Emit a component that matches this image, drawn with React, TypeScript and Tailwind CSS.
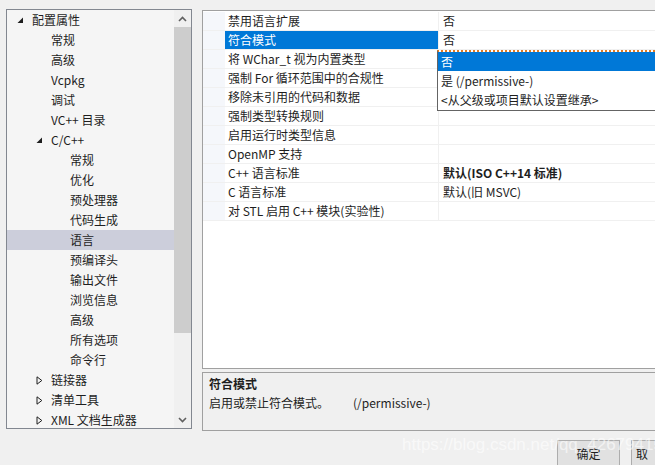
import React from "react";

type TreeItem = { label: string; level: number; arrow?: "open" | "closed"; selected?: boolean };

const treeItems: TreeItem[] = [
  { label: "配置属性", level: 0, arrow: "open" },
  { label: "常规", level: 1 },
  { label: "高级", level: 1 },
  { label: "Vcpkg", level: 1 },
  { label: "调试", level: 1 },
  { label: "VC++ 目录", level: 1 },
  { label: "C/C++", level: 1, arrow: "open" },
  { label: "常规", level: 2 },
  { label: "优化", level: 2 },
  { label: "预处理器", level: 2 },
  { label: "代码生成", level: 2 },
  { label: "语言", level: 2, selected: true },
  { label: "预编译头", level: 2 },
  { label: "输出文件", level: 2 },
  { label: "浏览信息", level: 2 },
  { label: "高级", level: 2 },
  { label: "所有选项", level: 2 },
  { label: "命令行", level: 2 },
  { label: "链接器", level: 1, arrow: "closed" },
  { label: "清单工具", level: 1, arrow: "closed" },
  { label: "XML 文档生成器", level: 1, arrow: "closed" },
];

const props: { name: string; value: string; bold?: boolean; selected?: boolean }[] = [
  { name: "禁用语言扩展", value: "否" },
  { name: "符合模式", value: "否", selected: true },
  { name: "将 WChar_t 视为内置类型", value: "" },
  { name: "强制 For 循环范围中的合规性", value: "" },
  { name: "移除未引用的代码和数据", value: "" },
  { name: "强制类型转换规则", value: "" },
  { name: "启用运行时类型信息", value: "" },
  { name: "OpenMP 支持", value: "" },
  { name: "C++ 语言标准", value: "默认(ISO C++14 标准)", bold: true },
  { name: "C 语言标准", value: "默认(旧 MSVC)" },
  { name: "对 STL 启用 C++ 模块(实验性)", value: "" },
];

const indent = ["pl-[10px]", "pl-[29px]", "pl-[48px]"];

function Arrow({ kind }: { kind: "open" | "closed" }) {
  if (kind === "open") {
    return (
      <svg width="7" height="7" viewBox="0 0 7 7">
        <path d="M6 0.5 L6 6 L0.5 6 Z" fill="#1e1e1e" />
      </svg>
    );
  }
  return (
    <svg width="7" height="9" viewBox="0 0 7 9">
      <path d="M1 0.8 L5.8 4.5 L1 8.2 Z" fill="none" stroke="#1e1e1e" strokeWidth="1" />
    </svg>
  );
}

function Tree() {
  return (
    <div className="flex h-[420px] w-[186px] shrink-0 border border-[#828790] bg-[#f5f5f5]">
      <div className="flex-1 overflow-hidden">
        {treeItems.map((it, i) => (
          <div
            key={i}
            className={`flex h-[20px] items-center ${indent[it.level]} ${it.selected ? "bg-[#cccedb]" : ""}`}
          >
            <span className="flex w-[15px] shrink-0 items-center">{it.arrow && <Arrow kind={it.arrow} />}</span>
            <span className="whitespace-nowrap text-[#1e1e1e]">{it.label}</span>
          </div>
        ))}
      </div>
      <div className="flex w-[17px] shrink-0 flex-col bg-[#f0f0f0]">
        <div className="flex h-[17px] items-center justify-center">
          <svg width="9" height="6" viewBox="0 0 9 6">
            <path d="M1 5 L4.5 1.5 L8 5" fill="none" stroke="#606060" strokeWidth="1.6" />
          </svg>
        </div>
        <div className="h-[306px] bg-[#cdcdcd]" />
        <div className="flex-1" />
        <div className="flex h-[17px] items-center justify-center">
          <svg width="9" height="6" viewBox="0 0 9 6">
            <path d="M1 1 L4.5 4.5 L8 1" fill="none" stroke="#606060" strokeWidth="1.6" />
          </svg>
        </div>
      </div>
    </div>
  );
}

function Grid() {
  return (
    <div className="relative h-[359px] w-[470px] border border-[#a0a0a0] bg-white pt-[1px]">
      {props.map((p, i) => (
        <div key={i} className="flex h-[19px] border-b border-[#f0f0f0]">
          <div className="w-[22px] shrink-0 bg-[#f5f7fb]" />
          <div
            className={`flex w-[213px] shrink-0 items-center pl-[3px] whitespace-nowrap ${
              p.selected ? "bg-[#0078d7] text-white" : "text-[#1e1e1e]"
            }`}
          >
            {p.name}
          </div>
          <div className="w-px shrink-0 bg-[#f0f0f0]" />
          <div className={`flex flex-1 items-center pl-[4px] whitespace-nowrap text-[#1e1e1e] ${p.bold ? "font-bold" : ""}`}>
            {p.value}
          </div>
        </div>
      ))}
      <div className="absolute left-[234px] top-[39px] w-[230px] border border-[#646464] border-t-[#e07b23] border-t-2 border-dotted bg-white text-[#1e1e1e] [border-left-style:solid] [border-bottom-style:solid]">
        <div className="flex h-[19px] items-center bg-[#0078d7] pl-[3px] text-white">否</div>
        <div className="flex h-[19px] items-center pl-[3px] whitespace-nowrap">是 (/permissive-)</div>
        <div className="flex h-[20px] items-center pl-[3px] whitespace-nowrap">&lt;从父级或项目默认设置继承&gt;</div>
      </div>
    </div>
  );
}

export default function App() {
  return (
    <div
      className="relative h-[465px] w-[655px] overflow-hidden bg-[#f0f0f0] text-[12px] leading-none"
      style={{ fontFamily: '"Noto Sans CJK SC", "Noto Sans", sans-serif' }}
    >
      <div className="flex pl-[6px] pt-[9px]">
        <Tree />
        <div className="ml-[10px] mt-[1px] flex shrink-0 flex-col">
          <Grid />
          <div className="mt-[3px] h-[59px] w-[470px] border border-[#a0a0a0] px-[6px] pt-[5px] text-[#1e1e1e]">
            <div className="font-bold">符合模式</div>
            <div className="mt-[7px] flex whitespace-nowrap">
              <span>启用或禁止符合模式。</span>
              <span className="ml-[24px]">(/permissive-)</span>
            </div>
          </div>
        </div>
      </div>
      <div className="mt-[9px] flex justify-end gap-[11px]">
        <div className="flex h-[28px] w-[63px] shrink-0 items-center justify-center border border-[#adadad] bg-[#e1e1e1] text-[#1e1e1e]">
          确定
        </div>
        <div className="flex h-[28px] w-[24px] shrink-0 items-center justify-start overflow-hidden border border-r-0 border-[#adadad] bg-[#e1e1e1] pl-[4px] text-[#1e1e1e]">
          取
        </div>
      </div>
      <div
        className="absolute left-[402px] top-[436px] whitespace-nowrap text-[17px] text-white/60"
        style={{ fontFamily: '"Liberation Sans", Arial, sans-serif' }}
      >
        https://blog.csdn.net/qq_42679415
      </div>
    </div>
  );
}
